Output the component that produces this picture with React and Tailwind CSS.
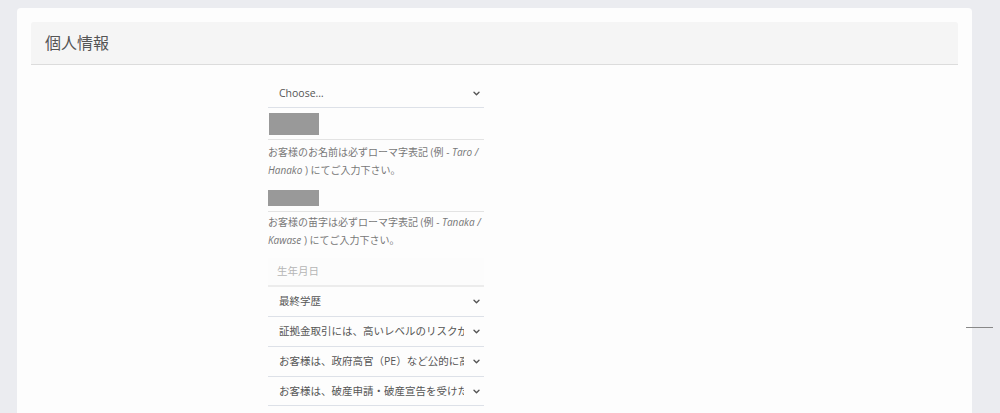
import React from "react";

const font = { fontFamily: '"Open Sans", "Noto Sans CJK JP", sans-serif' };

function Chevron() {
  return (
    <svg width="7" height="5" viewBox="0 0 7 5" className="shrink-0">
      <polyline points="1,1.2 3.5,3.7 6,1.2" fill="none" stroke="#555555" strokeWidth="1.4" strokeLinecap="round" strokeLinejoin="round" />
    </svg>
  );
}

function SelectRow({ label, h = "h-[29px]", border = "border-[#dde1e8]" }) {
  return (
    <div className={`flex items-center ${h} bg-[#fdfdfd] border-b ${border} pl-[11px] pr-[4px] gap-[9px]`}>
      <span className="flex-1 overflow-hidden whitespace-nowrap text-[10.5px] text-[#555] pt-px">{label}</span>
      <Chevron />
    </div>
  );
}

export default function App() {
  return (
    <div className="relative min-h-screen bg-[#ebecf0] pt-[8px] pl-[17px] pr-[28px]" style={font}>
      <div className="min-h-[405px] bg-[#fdfdfd] rounded-t-[4px] p-[14px]">
        <div className="h-[43px] bg-[#f5f5f5] rounded-t-[3px] border-b border-[#dcdcdc] flex items-center pl-[14px]">
          <h2 className="text-[16px] text-[#555] leading-none">個人情報</h2>
        </div>
        <div className="ml-[237px] w-[216px] pt-[15px]">
          <SelectRow label="Choose…" h="h-[28px]" />
          <div className="h-[32px] bg-[#fdfdfd] border-b border-[#e3e3e3] flex items-center pl-[1px]">
            <div className="w-[50px] h-[22px] bg-[#999999]" />
          </div>
          <p className="mt-[3px] text-[10px] leading-[18px] text-[#777]">
            お客様のお名前は必ずローマ字表記 (例 - <i>Taro / Hanako</i> ) にてご入力下さい。
          </p>
          <div className="mt-[5px] h-[28px] bg-[#fdfdfd] border-b border-[#e3e3e3] flex items-center">
            <div className="w-[51px] h-[16px] bg-[#999999]" />
          </div>
          <p className="mt-[1px] text-[10px] leading-[18px] text-[#777]">
            お客様の苗字は必ずローマ字表記 (例 - <i>Tanaka / Kawase</i> ) にてご入力下さい。
          </p>
          <div className="mt-[9px] h-[29px] bg-[#fcfcfc] border-b-2 border-[#ececec] flex items-center pl-[9px]">
            <span className="text-[10.5px] text-[#b5b5b5]">生年月日</span>
          </div>
          <SelectRow label="最終学歴" h="h-[30px]" />
          <SelectRow label="証拠金取引には、高いレベルのリスクがあることを理解していますか？" h="h-[30px]" />
          <SelectRow label="お客様は、政府高官（PE）など公的に高い地位にありますか？" h="h-[30px]" />
          <SelectRow label="お客様は、破産申請・破産宣告を受けたことがありますか？" h="h-[29px]" />
        </div>
      </div>
      <div className="absolute top-[327px] left-[966px] w-[27px] h-px bg-[#888888]" />
    </div>
  );
}
